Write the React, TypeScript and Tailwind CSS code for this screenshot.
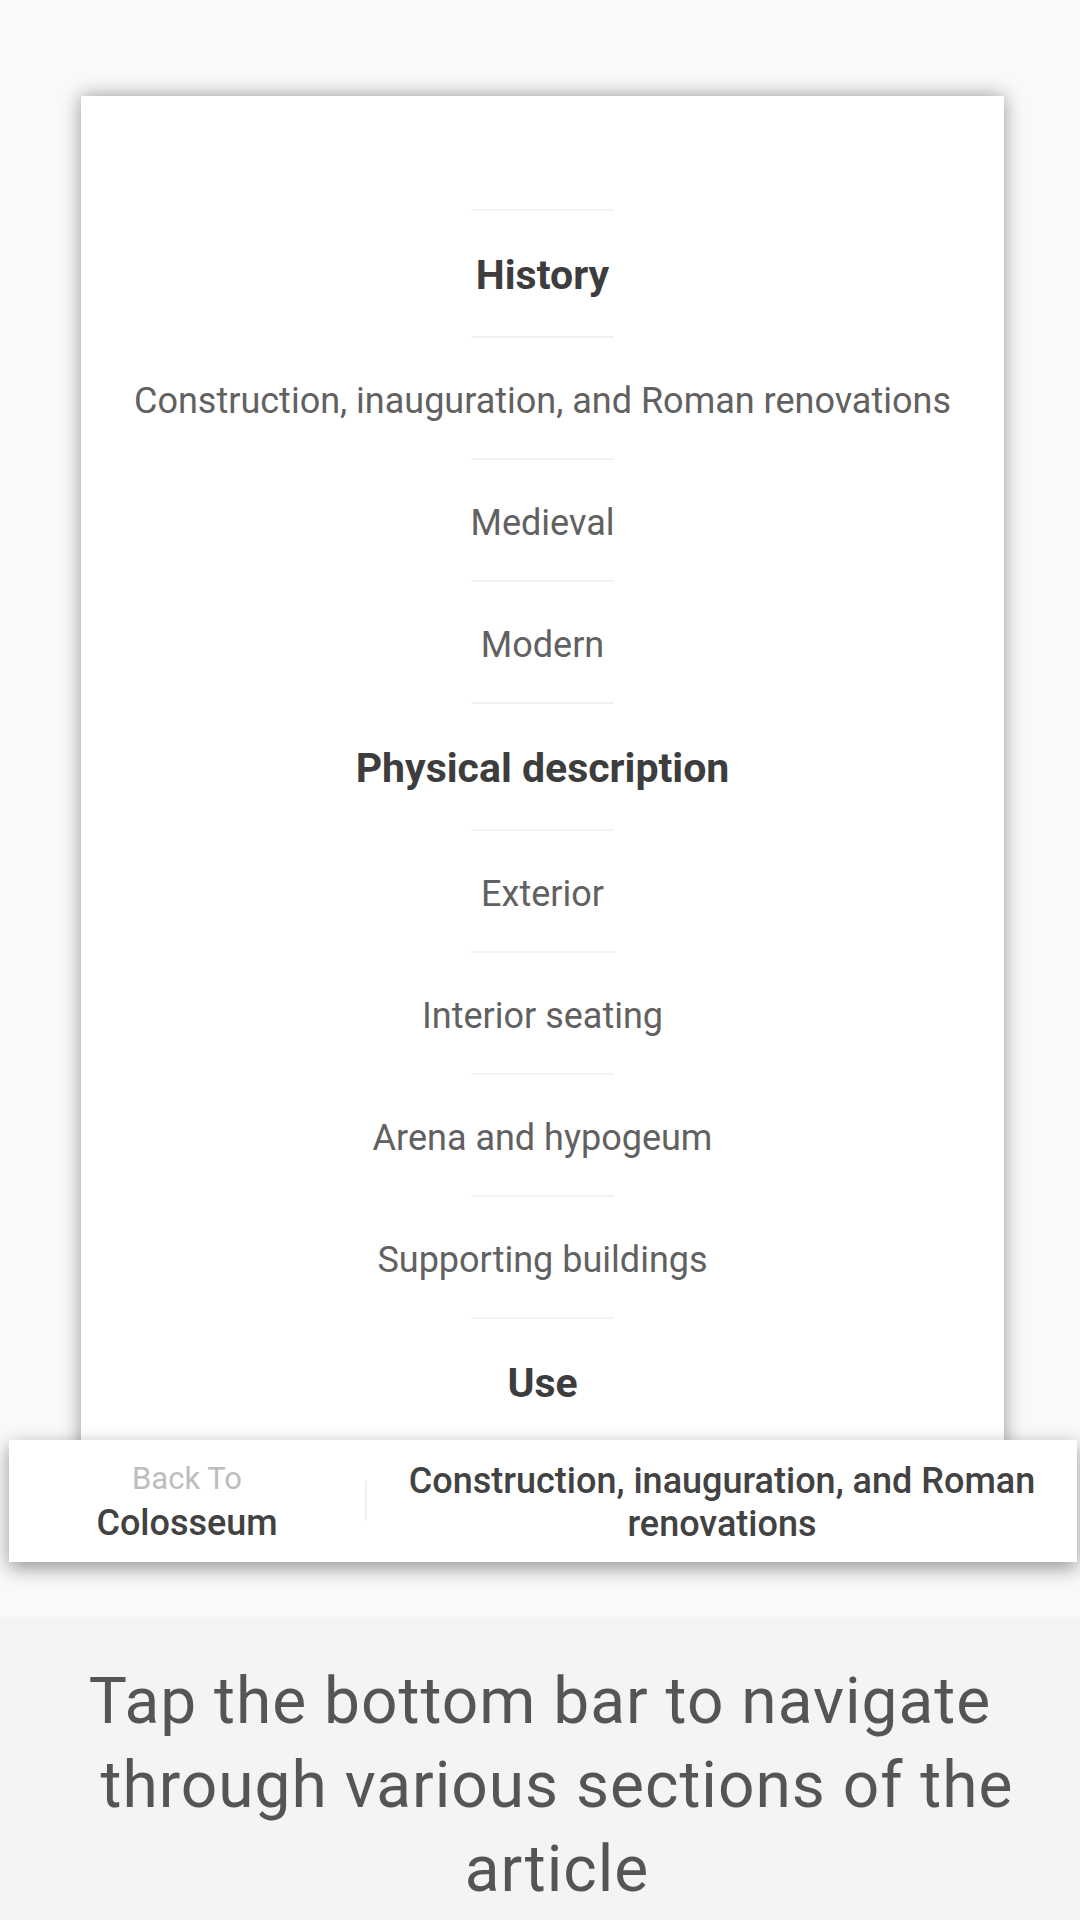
import React from "react";

type Section = { title: string; heading?: boolean };

const sections: Section[] = [
  { title: "History", heading: true },
  { title: "Construction, inauguration, and Roman renovations" },
  { title: "Medieval" },
  { title: "Modern" },
  { title: "Physical description", heading: true },
  { title: "Exterior" },
  { title: "Interior seating" },
  { title: "Arena and hypogeum" },
  { title: "Supporting buildings" },
  { title: "Use", heading: true },
];

function SectionRow({ title, heading }: Section) {
  return (
    <li className="flex flex-col items-center">
      <div className="w-[143px] h-[2px] bg-[#f3f3f3]" />
      {heading ? (
        <div className="h-[125px] pt-[5px] flex items-center justify-center text-[41px] font-bold text-[#3d3d3d]">
          {title}
        </div>
      ) : (
        <div className="h-[120px] pt-[5px] flex items-center justify-center text-[36px] text-[#616161]">
          {title}
        </div>
      )}
    </li>
  );
}

export default function App() {
  return (
    <div className="w-[1080px] min-h-[1920px] bg-[#f9f9f9] font-['Roboto',sans-serif] overflow-hidden">
      {/* tarjeta con el indice */}
      <div className="pt-[96px]">
        <div className="ml-[81px] w-[923px] bg-white shadow-[0_0_18px_rgba(0,0,0,0.4)] pt-[113px] pb-[56px]">
          <ul>
            {sections.map((s) => (
              <SectionRow key={s.title} {...s} />
            ))}
          </ul>
        </div>

        {/* barra inferior */}
        <div className="relative z-10 -mt-[60px] ml-[9px] w-[1068px] h-[122px] bg-white shadow-[0_6px_18px_rgba(0,0,0,0.4)] flex items-center">
          <div className="w-[356px] flex flex-col items-center leading-[45px]">
            <span className="text-[31px] text-[#bdbdbd]">Back To</span>
            <span className="text-[36px] font-medium text-[#424242]">Colosseum</span>
          </div>
          <div className="w-[2px] h-[40px] bg-[#efefef]" />
          <div className="flex-1 px-[16px] pt-[3px] text-center text-[36px] leading-[43px] font-medium text-[#424242]">
            Construction, inauguration, and Roman renovations
          </div>
        </div>
      </div>

      <div className="mt-[55px] bg-[#f4f4f4] pt-[43px] pb-[40px] text-[64px] leading-[84px] text-[#555555] tracking-[1px]">
        <div className="text-center">Tap the bottom bar to navigate</div>
        <div className="text-center pl-[34px]">through various sections of the</div>
        <div className="text-center pl-[34px]">article</div>
      </div>
    </div>
  );
}
